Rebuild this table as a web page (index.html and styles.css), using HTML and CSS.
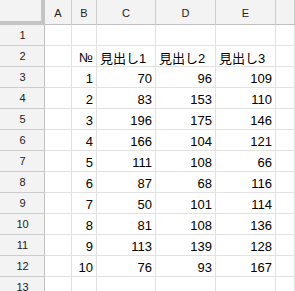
FILE: index.html
```html
<!DOCTYPE html>
<html lang="ja">
<head>
<meta charset="utf-8">
<link rel="stylesheet" href="styles.css">
</head>
<body>
<div class="sheet">
  <div class="corner"></div>
  <div class="ch">A</div><div class="ch">B</div><div class="ch">C</div><div class="ch">D</div><div class="ch">E</div><div class="ch"></div>

  <div class="rh">1</div><div class="c"></div><div class="c"></div><div class="c"></div><div class="c"></div><div class="c"></div><div class="c"></div>
  <div class="rh">2</div><div class="c"></div><div class="c n">№</div><div class="c t">見出し1</div><div class="c t">見出し2</div><div class="c t">見出し3</div><div class="c"></div>
  <div class="rh">3</div><div class="c"></div><div class="c n">1</div><div class="c n">70</div><div class="c n">96</div><div class="c n">109</div><div class="c"></div>
  <div class="rh">4</div><div class="c"></div><div class="c n">2</div><div class="c n">83</div><div class="c n">153</div><div class="c n">110</div><div class="c"></div>
  <div class="rh">5</div><div class="c"></div><div class="c n">3</div><div class="c n">196</div><div class="c n">175</div><div class="c n">146</div><div class="c"></div>
  <div class="rh">6</div><div class="c"></div><div class="c n">4</div><div class="c n">166</div><div class="c n">104</div><div class="c n">121</div><div class="c"></div>
  <div class="rh">7</div><div class="c"></div><div class="c n">5</div><div class="c n">111</div><div class="c n">108</div><div class="c n">66</div><div class="c"></div>
  <div class="rh">8</div><div class="c"></div><div class="c n">6</div><div class="c n">87</div><div class="c n">68</div><div class="c n">116</div><div class="c"></div>
  <div class="rh">9</div><div class="c"></div><div class="c n">7</div><div class="c n">50</div><div class="c n">101</div><div class="c n">114</div><div class="c"></div>
  <div class="rh">10</div><div class="c"></div><div class="c n">8</div><div class="c n">81</div><div class="c n">108</div><div class="c n">136</div><div class="c"></div>
  <div class="rh">11</div><div class="c"></div><div class="c n">9</div><div class="c n">113</div><div class="c n">139</div><div class="c n">128</div><div class="c"></div>
  <div class="rh">12</div><div class="c"></div><div class="c n">10</div><div class="c n">76</div><div class="c n">93</div><div class="c n">167</div><div class="c"></div>
  <div class="rh">13</div><div class="c"></div><div class="c"></div><div class="c"></div><div class="c"></div><div class="c"></div><div class="c"></div>
</div>
</body>
</html>
```
FILE: styles.css
```css
html, body {
  margin: 0;
  padding: 0;
  background: #ffffff;
  overflow: hidden;
}
.sheet {
  display: grid;
  grid-template-columns: 45px 27px 25px 59px 60px 60px 19px;
  grid-template-rows: 25px repeat(13, 21px);
  font-family: "Liberation Sans", Arial, "Noto Sans CJK JP", sans-serif;
}
.sheet > div {
  box-sizing: border-box;
  border-right: 1px solid #e2e2e2;
  border-bottom: 1px solid #e2e2e2;
  white-space: nowrap;
  overflow: hidden;
}
.corner {
  background: #f3f3f3;
  border-right: 4px solid #c4c4c4 !important;
  border-bottom: 4px solid #c4c4c4 !important;
}
.ch {
  background: #f3f3f3;
  border-right-color: #cccccc !important;
  border-bottom-color: #c0c0c0 !important;
  font-size: 11px;
  color: #222222;
  display: flex;
  align-items: center;
  justify-content: center;
  padding-top: 1px;
}
.rh {
  background: #f3f3f3;
  border-right-color: #c0c0c0 !important;
  border-bottom-color: #cccccc !important;
  font-size: 11px;
  color: #222222;
  display: flex;
  align-items: center;
  justify-content: center;
  padding-left: 1px;
}
.c {
  font-size: 13px;
  color: #000000;
  display: flex;
  align-items: center;
  padding: 2px 3px 0 3px;
}
.n {
  justify-content: flex-end;
}
.t {
  justify-content: flex-start;
  overflow: visible !important;
}
```
